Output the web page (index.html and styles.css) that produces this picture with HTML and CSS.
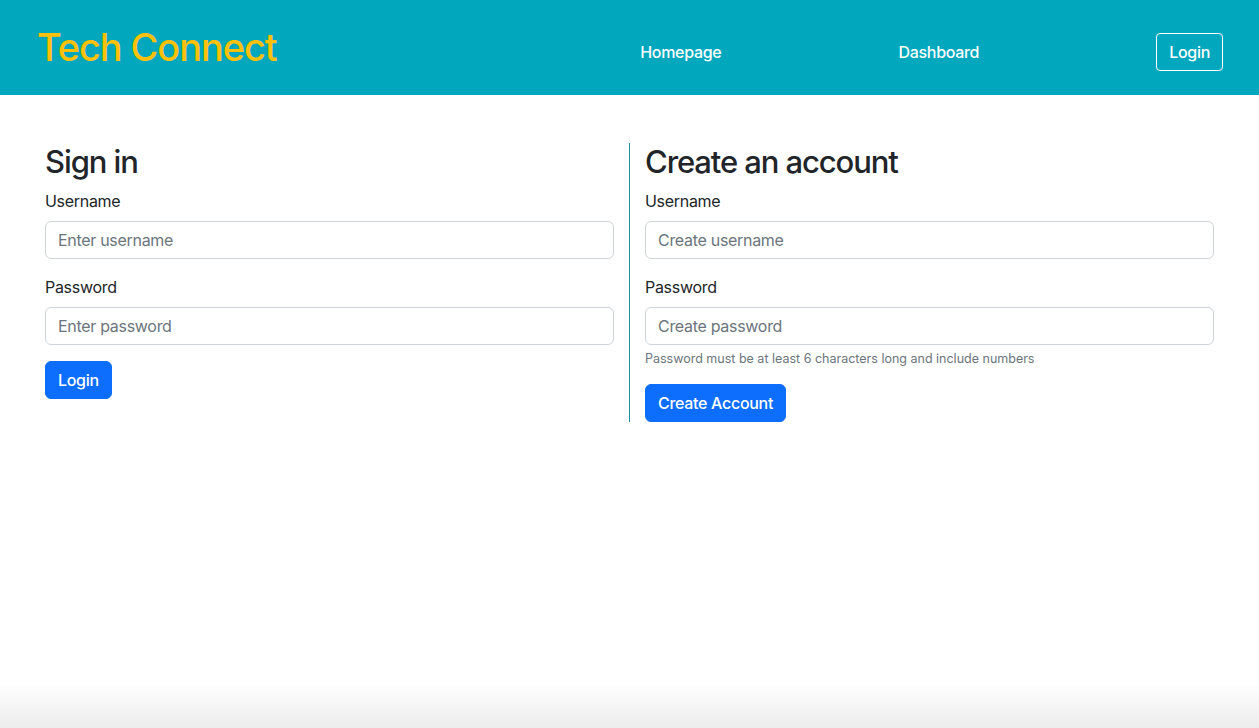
FILE: index.html
```html
<!DOCTYPE html>
<html lang="en">
<head>
<meta charset="utf-8">
<title>Tech Connect</title>
<link rel="stylesheet" href="styles.css">
</head>
<body>
<div class="page">
  <header class="navbar">
    <a class="brand" href="#">Tech Connect</a>
    <nav class="nav">
      <a class="nav-link" href="#">Homepage</a>
      <a class="nav-link" href="#">Dashboard</a>
      <a class="nav-btn" href="#">Login</a>
    </nav>
  </header>
  <main class="main">
    <section class="col">
      <h2 class="title">Sign in</h2>
      <div class="field">
        <label class="label" for="u1">Username</label>
        <input class="input" id="u1" type="text" placeholder="Enter username">
      </div>
      <div class="field">
        <label class="label" for="p1">Password</label>
        <input class="input" id="p1" type="password" placeholder="Enter password">
      </div>
      <button class="btn" type="button">Login</button>
    </section>
    <section class="col col-right">
      <h2 class="title">Create an account</h2>
      <div class="field">
        <label class="label" for="u2">Username</label>
        <input class="input" id="u2" type="text" placeholder="Create username">
      </div>
      <div class="field">
        <label class="label" for="p2">Password</label>
        <input class="input" id="p2" type="password" placeholder="Create password">
        <div class="help">Password must be at least 6 characters long and include numbers</div>
      </div>
      <button class="btn" type="button">Create Account</button>
    </section>
  </main>
  <footer class="footer"></footer>
</div>
</body>
</html>
```
FILE: styles.css
```css
* { box-sizing: border-box; }
html, body { margin: 0; padding: 0; }
body {
  font-family: Inter, "Noto Sans", "Liberation Sans", sans-serif;
  font-size: 16px;
  line-height: 1.5;
  letter-spacing: -0.3px;
  color: #212529;
  background: #fff;
}
.page {
  min-height: 100vh;
  display: flex;
  flex-direction: column;
}
.navbar {
  height: 95px;
  background: #00a7bd;
  display: flex;
  align-items: center;
  padding: 0 36px 0 37px;
}
.brand {
  font-family: Inter, "Liberation Sans", Arial, sans-serif;
  font-size: 38px;
  font-weight: 500;
  color: #ffc107;
  text-decoration: none;
  line-height: 1;
  margin-top: -1px;
  letter-spacing: -1.1px;
}
.nav {
  margin-left: auto;
  display: flex;
  align-items: center;
  gap: 177px;
  margin-top: 9px;
}
.nav-link {
  color: #fff;
  text-decoration: none;
  font-weight: 500;
  font-size: 16px;
}
.nav-btn {
  color: #fff;
  text-decoration: none;
  font-weight: 500;
  border: 1px solid #fff;
  border-radius: 4px;
  height: 38px;
  padding: 0 12px;
  display: flex;
  align-items: center;
  margin-top: -1px;
}
.main {
  display: grid;
  grid-template-columns: 599px 600px;
  padding: 0 30px;
  margin-top: 48px;
  align-items: start;
}
.col {
  padding: 0 15px;
}
.col-right {
  border-left: 1px solid #1d8f9d;
}
.title {
  margin: 0 0 8px;
  font-size: 31px;
  font-weight: 500;
  line-height: 38.4px;
  letter-spacing: -1.1px;
}
.field {
  margin-bottom: 16px;
}
.label {
  display: block;
  margin-bottom: 8px;
}
.input {
  display: block;
  width: 100%;
  height: 38px;
  padding: 6px 12px;
  font-family: inherit;
  font-size: 16px;
  letter-spacing: -0.3px;
  color: #212529;
  border: 1px solid #ced4da;
  border-radius: 6px;
  background: #fff;
}
.input::placeholder { color: #6c757d; opacity: 1; }
.help {
  margin-top: 4px;
  font-size: 12.5px;
  line-height: 19px;
  letter-spacing: 0;
  color: #6c757d;
}
.btn {
  font-family: inherit;
  font-size: 16px;
  font-weight: 500;
  letter-spacing: -0.3px;
  color: #fff;
  background: #0d6efd;
  border: 1px solid #0d6efd;
  border-radius: 6px;
  height: 38px;
  padding: 0 12px;
  cursor: pointer;
}
.footer {
  margin-top: auto;
  height: 45px;
  background: linear-gradient(to bottom, rgba(255,255,255,0), #ececec);
}
```
